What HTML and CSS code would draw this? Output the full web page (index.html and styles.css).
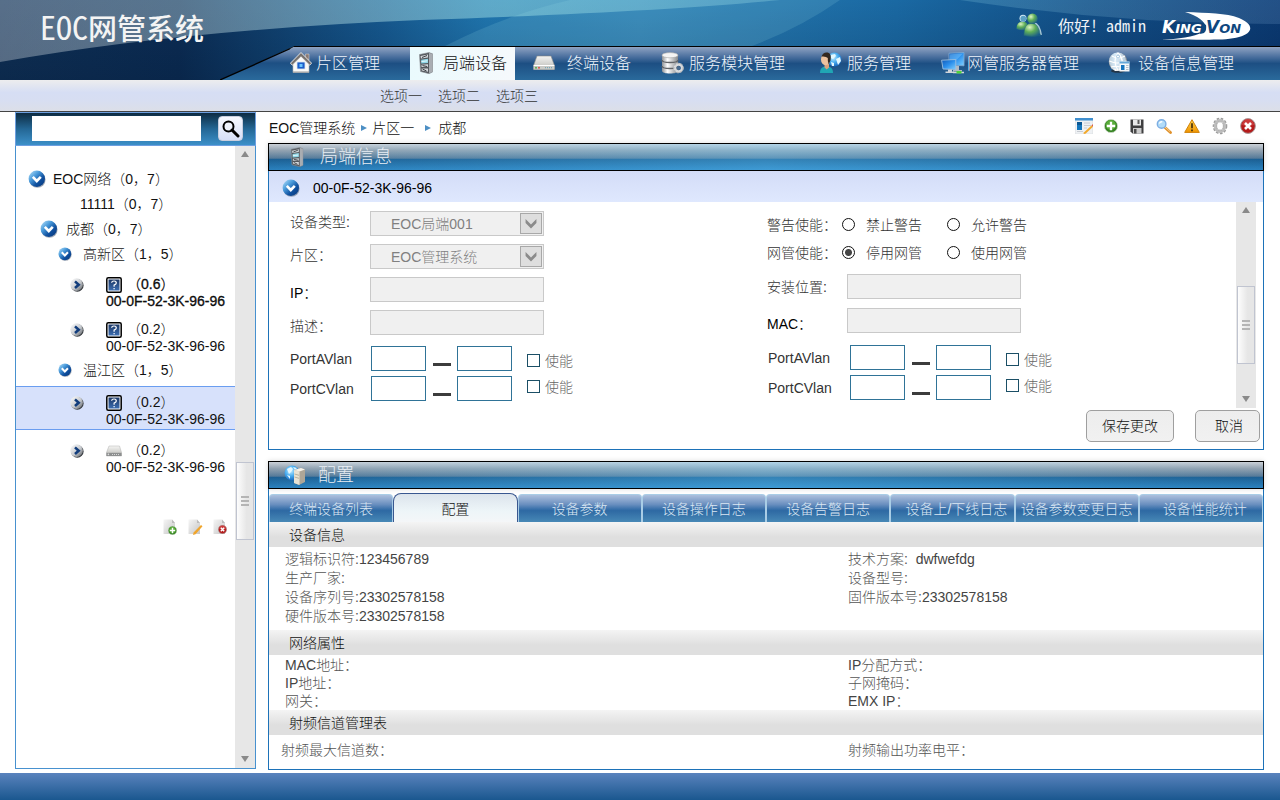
FILE: index.html
```html
<!DOCTYPE html>
<html lang="zh-CN">
<head>
<meta charset="utf-8">
<title>EOC网管系统</title>
<link rel="stylesheet" href="styles.css">
</head>
<body>
<svg class="defs" aria-hidden="true">
  <defs>
    <linearGradient id="g-ball" x1="0" y1="0" x2="1" y2="1"><stop offset="0" stop-color="#bfe6fb"/><stop offset=".35" stop-color="#4a9bdb"/><stop offset=".65" stop-color="#0f4f9e"/><stop offset="1" stop-color="#0a3878"/></linearGradient>
    <linearGradient id="g-grey" x1="0" y1="0" x2="1" y2="1"><stop offset="0" stop-color="#ffffff"/><stop offset=".55" stop-color="#c9ccd0"/><stop offset="1" stop-color="#55595e"/></linearGradient>
    <linearGradient id="g-metal" x1="0" y1="0" x2="1" y2="0"><stop offset="0" stop-color="#8f9295"/><stop offset=".35" stop-color="#ffffff"/><stop offset="1" stop-color="#85888b"/></linearGradient>
    <linearGradient id="g-screen" x1="0" y1="0" x2="1" y2="1"><stop offset="0" stop-color="#0f57b5"/><stop offset=".5" stop-color="#2b8fec"/><stop offset="1" stop-color="#7fd0ff"/></linearGradient>
    <linearGradient id="g-help" x1="0" y1="0" x2="0" y2="1"><stop offset="0" stop-color="#1b3766"/><stop offset="1" stop-color="#3c6db0"/></linearGradient>
    <linearGradient id="g-drive" x1="0" y1="0" x2="0" y2="1"><stop offset="0" stop-color="#f5f5f3"/><stop offset="1" stop-color="#b9b9b5"/></linearGradient>
    <linearGradient id="g-page" x1="0" y1="0" x2="1" y2="1"><stop offset="0" stop-color="#f6f6f6"/><stop offset="1" stop-color="#c6c6c6"/></linearGradient>
    <linearGradient id="g-warn" x1="0" y1="0" x2="0" y2="1"><stop offset="0" stop-color="#ffd24a"/><stop offset="1" stop-color="#f09400"/></linearGradient>
    <radialGradient id="g-globe" cx=".4" cy=".35" r=".7"><stop offset="0" stop-color="#c9efff"/><stop offset=".5" stop-color="#4aaef0"/><stop offset="1" stop-color="#1360b8"/></radialGradient>
    <radialGradient id="g-person" cx=".35" cy=".3" r=".8"><stop offset="0" stop-color="#dff5c4"/><stop offset=".45" stop-color="#5fae58"/><stop offset="1" stop-color="#14558d"/></radialGradient>
    <linearGradient id="g-rim" x1="0" y1="0" x2="1" y2="0"><stop offset="0" stop-color="#fff" stop-opacity=".3"/><stop offset=".4" stop-color="#9fe0e4" stop-opacity=".48"/><stop offset=".75" stop-color="#7fc4dc" stop-opacity=".26"/><stop offset="1" stop-color="#6f98c4" stop-opacity=".24"/></linearGradient>
    <linearGradient id="g-nav" x1="0" y1="0" x2="0" y2="1"><stop offset="0" stop-color="#8fa3c2"/><stop offset=".3" stop-color="#4a6f9e"/><stop offset=".5" stop-color="#1d4f83"/><stop offset="1" stop-color="#2a6a9c"/></linearGradient>
  </defs>
  <symbol id="i-ball" viewBox="0 0 18 18">
    <circle cx="9.400" cy="9.600" r="8.200" fill="#4b5a70" opacity=".5"/>
    <circle cx="8.800" cy="8.800" r="8.200" fill="url(#g-ball)"/>
    <path d="M4.800 6.800l4 4.200 4-4.200" fill="none" stroke="#fff" stroke-width="2.600"/>
  </symbol>
  <symbol id="i-arrow" viewBox="0 0 14 14">
    <circle cx="7.300" cy="7.400" r="6.300" fill="#33373c"/>
    <circle cx="6.600" cy="6.600" r="6.300" fill="url(#g-grey)"/>
    <path d="M5 3.400l3.700 3.300L5 10" fill="none" stroke="#123d7c" stroke-width="2.600"/>
  </symbol>
  <symbol id="i-help" viewBox="0 0 16 16">
    <rect x=".8" y=".8" width="14.400" height="14.400" rx="1.500" fill="#fff" stroke="#000" stroke-width="1.500"/>
    <rect x="2.500" y="2.500" width="11" height="11" fill="url(#g-help)"/>
    <path d="M5.600 5.800Q5.800 4 8 4t2.300 1.900Q10.300 7.200 8.100 8.100V9.700M8.100 11v1.200" fill="none" stroke="#fff" stroke-width="1.200"/>
  </symbol>
  <symbol id="i-drive" viewBox="0 0 22 16">
    <path d="M4 1h14l3.500 9.500v4H.5v-4z" fill="url(#g-drive)" stroke="#8c8c88" stroke-width=".6"/>
    <path d="M.7 10.500h20.600v4H.7z" fill="#c9cac6"/>
    <path d="M.7 10.500h20.600" stroke="#fff"/>
    <circle cx="3" cy="12.700" r="1" fill="#5bab4e"/><circle cx="6" cy="12.700" r="1" fill="#d9564a"/>
    <path d="M12 12.700h7" stroke="#77a6b8" stroke-width="1.200" stroke-dasharray="1 1"/>
  </symbol>
  <symbol id="i-driveg" viewBox="0 0 16 12">
    <path d="M3 1h10.500l2 6.500V11H.5V7.500z" fill="url(#g-drive)" stroke="#b0b0b0" stroke-width=".5"/>
    <path d="M.5 7.800h15V11H.5z" fill="#8d8f8f"/>
    <path d="M6 9.500h8" stroke="#d8d8d8" stroke-dasharray="1 1"/><circle cx="2.400" cy="9.400" r=".8" fill="#ddd"/>
  </symbol>
  <symbol id="i-server" viewBox="0 0 16 22">
    <path d="M1.500 2.500L11 .5l3.500 1.300V20L11 21.700 2.500 19.500z" fill="#54585d" stroke="#8f9499" stroke-width=".6"/>
    <path d="M11 .7l3.500 1.300v18L11 21.500z" fill="#a9adb2"/>
    <path d="M2.500 4l7.500-1.500v3L3 6.500zM3.500 12.800l6.500-.5v2.500l-6.500.3zM3.500 16.500l6.500-.1v3.300l-6.200-1.200z" fill="#d2d6da"/>
    <path d="M3.200 7.700l6.800-1v4.200l-6.800.7z" fill="#8fd6e6"/>
    <path d="M3.500 9.500l6-.7" stroke="#e8fafd" stroke-width="1"/>
    <path d="M4.500 13.500l4.500 1M4.500 17l4 2M4 5.500l5-2" stroke="#2d3135" stroke-width=".9"/>
  </symbol>
  <symbol id="i-home" viewBox="0 0 22 22">
    <path d="M15.500 2H19v6h-3.500z" fill="#8b7a74" stroke="#d8d8d8" stroke-width=".5"/>
    <path d="M3 11L11 3l8 8v9.500H3z" fill="#fafaf8" stroke="#b5b5b5" stroke-width=".6"/>
    <path d="M.4 11.200L11 .5l10.600 10.700-2 2L11 4.800l-8.600 8.400z" fill="#77726f" stroke="#f0f0f0" stroke-width=".9"/>
    <path d="M7 10h8v7H7z" fill="#1c5fcb" stroke="#dfe6ef" stroke-width=".8"/><path d="M9.500 12h3v3h-3z" fill="#6cc5ff"/>
    <path d="M3 20h16" stroke="#9b9b9b"/>
  </symbol>
  <symbol id="i-db" viewBox="0 0 23 22">
    <path d="M1 3v16c0 1.600 3.500 2.500 8 2.500s8-.9 8-2.500V3z" fill="url(#g-metal)"/>
    <ellipse cx="9" cy="3.200" rx="8" ry="2.600" fill="#f4f4f4" stroke="#a6a6a6" stroke-width=".6"/>
    <path d="M1 8c0 1.500 3.500 2.500 8 2.500S17 9.500 17 8M1 14c0 1.500 3.500 2.500 8 2.500s8-1 8-2.500" fill="none" stroke="#626568" stroke-width="1.300"/>
    <circle cx="17.500" cy="16" r="3.600" fill="none" stroke="#d9dbdd" stroke-width="2.600"/>
    <circle cx="17.500" cy="16" r="4.700" fill="none" stroke="#b2b6ba" stroke-width="1.200" stroke-dasharray="2 1.400"/>
    <circle cx="17.500" cy="16" r="2" fill="#476a8e"/>
  </symbol>
  <symbol id="i-user" viewBox="0 0 23 22">
    <circle cx="15.500" cy="7.500" r="7" fill="url(#g-globe)"/>
    <path d="M12 3l4-1 1 2-3 3-2-1zM17 7l4-2 1 4-3 4zM12 10l3 1v3h-2z" fill="#e2f7ff"/>
    <path d="M1 21c0-5 2.500-6.500 6.500-6.500S14 16 14 21z" fill="#20a6b4"/>
    <path d="M5.500 11.500h4.500v4l-2.300 2-2.200-2z" fill="#dba27d"/>
    <ellipse cx="6.500" cy="7.500" rx="4.500" ry="5.700" fill="#edc19e"/>
    <path d="M2.500 4.500Q4 .5 7.500.5C11 .5 12.500 3 11.500 8.500l-1.800 3.800Q8.500 9 8.800 6 7 4 2.500 4.500z" fill="#332720"/>
  </symbol>
  <symbol id="i-monitors" viewBox="0 0 24 22">
    <path d="M14 14h4v4h3v1.500h-9V18h2z" fill="#b3bac2"/>
    <path d="M8 1.200L23 .5v13.300L8 13z" fill="url(#g-screen)" stroke="#7ea8cf" stroke-width=".9"/>
    <path d="M9 2.200l13-.7-8 8-5 2z" fill="#7ecaff" opacity=".45"/>
    <path d="M.6 8.200l14.200-.7v10L2 17z" fill="url(#g-screen)" stroke="#9dbfdf" stroke-width=".9"/>
    <path d="M7 17.500h4v2h2V21H4.500v-1.500H7z" fill="#d0d5da"/>
    <path d="M12 20.500h11" stroke="#d5d8da" stroke-width="1.500"/><path d="M15.500 19h5v2.500h-5z" fill="#4fd43a"/>
  </symbol>
  <symbol id="i-netinfo" viewBox="0 0 22 21">
    <ellipse cx="10" cy="19" rx="7" ry="1.800" fill="#23272b" opacity=".7"/>
    <circle cx="10" cy="9.800" r="9.300" fill="url(#g-metal)"/>
    <circle cx="9.500" cy="9" r="8.400" fill="#c9e2f4" opacity=".72"/>
    <path d="M1.500 9q8 4 17 0M10 .8q-6 8 0 17.500M4 4q6 4 13 0M10 1q8 8 1 17M3 15q6-2 12 1" fill="none" stroke="#fff" stroke-width="1.100"/>
    <circle cx="10" cy="4.500" r="1.500" fill="#fff" stroke="#71a6cf" stroke-width=".6"/>
    <path d="M11.500 9.500h10v10h-10z" fill="#f6f8fa"/><path d="M11.500 9.500h10v2h-10z" fill="#66a7d8"/><path d="M13 13h3.500v5H13z" fill="#1674bd"/><path d="M18 13.500h2.500M18 15.500h2.500M18 17.500h2.500" stroke="#b4bfc9"/>
  </symbol>
  <symbol id="i-people" viewBox="0 0 27 24">
    <path d="M.5 16q0-7.500 6-7.500T12.500 16q-6 2.500-12 0z" fill="url(#g-person)"/>
    <circle cx="7" cy="5.200" r="3.500" fill="#cfe8f5"/><circle cx="7.300" cy="5.600" r="2.900" fill="#5aa0c5"/>
    <path d="M18 9q6 1 8 13l-5-1z" fill="#cfe7ec" opacity=".8"/>
    <path d="M8 22.500q-.5-12 7.500-12.200 7.500-.2 8.800 12.200-8 2.200-16.300 0z" fill="url(#g-person)" stroke="#256c75" stroke-width=".5"/>
    <circle cx="16.500" cy="5.800" r="5.200" fill="url(#g-person)"/>
  </symbol>
  <symbol id="i-globepc" viewBox="0 0 22 20">
    <circle cx="8" cy="8" r="7.500" fill="url(#g-globe)"/>
    <path d="M3 4l4-2 2 2-2 3-2 2zM3 10l3 1v3zM9 2l4 1-2 2z" fill="#e5f8ff"/>
    <path d="M10 5l7-2 4 1.500V17l-6 3-5-2z" fill="#aea697"/><path d="M10 5l5.500 1.500V20L10 18z" fill="#e8e2d3"/><path d="M10 5l7-2 4 1.500-5.500 2z" fill="#f7f3ea"/>
    <path d="M10.500 9l4.500 1.300M10.500 12l4.500 1.300" stroke="#aba48f" stroke-width=".8"/>
  </symbol>
  <symbol id="i-form" viewBox="0 0 18 16">
    <path d="M.3.5h17.400V16H.3z" fill="#eef1f4" stroke="#d0d4d8" stroke-width=".5"/><path d="M0 0h18v2.500H0z" fill="#3f8fcf"/>
    <path d="M2 4h5v8H2z" fill="#1476bd"/><path d="M2 4h5v3H2z" fill="#0b5793"/>
    <path d="M9 5h6M9 7.500h7M9 10h3M2 13.500h6" stroke="#c8ccd2"/>
    <path d="M16.500 7.500l1.500 1.300-7.500 7L8.500 16l.6-1.800z" fill="#f3a92b"/><path d="M16.500 7.500L18 6v2.800z" fill="#d9584e"/>
  </symbol>
  <symbol id="i-add" viewBox="0 0 14 14">
    <circle cx="7" cy="7" r="6.600" fill="#358321" stroke="#cfd8cb" stroke-width=".7"/><circle cx="6.800" cy="6" r="5" fill="#58ac39"/>
    <path d="M7 2.800v8.400M2.800 7h8.400" stroke="#fff" stroke-width="2.300"/>
  </symbol>
  <symbol id="i-save" viewBox="0 0 14 15">
    <path d="M.5.500h13v14h-11l-2-2z" fill="#3f3f40"/><path d="M3 .5h8v6H3z" fill="#e9e9e9"/><path d="M7.500 1h2v4h-2z" fill="#5a5a5a"/>
    <path d="M3 9h8.500v5.500H3z" fill="#cdcdcd"/><path d="M4 10h2.500v4.500H4z" fill="#4b4b4b"/>
  </symbol>
  <symbol id="i-zoom" viewBox="0 0 16 15">
    <path d="M9 8.500l5.500 5" stroke="#e0912b" stroke-width="2.800" stroke-linecap="round"/><path d="M9 8l5 4.500" stroke="#f8d494"/>
    <circle cx="5.600" cy="5" r="4.300" fill="#b2dcf8" stroke="#7daee3" stroke-width="1.400"/><path d="M3.300 4.500q1-2 3-1.700" stroke="#fff" fill="none" stroke-width="1.300"/>
  </symbol>
  <symbol id="i-warn" viewBox="0 0 16 14">
    <path d="M8 .7l7.300 12.700H.7z" fill="url(#g-warn)" stroke="#cf8208" stroke-linejoin="round"/><path d="M8 4.300v5M8 10.500v1.800" stroke="#47310b" stroke-width="1.700"/>
  </symbol>
  <symbol id="i-gear" viewBox="0 0 16 18">
    <ellipse cx="8" cy="9" rx="6.400" ry="7.400" fill="none" stroke="#9b9b9b" stroke-width="1.800" stroke-dasharray="2.600 1.500"/>
    <ellipse cx="8" cy="9" rx="4.900" ry="5.700" fill="#fff" stroke="#bdbdbd" stroke-width="2.600"/>
    <ellipse cx="8" cy="9" rx="3.400" ry="4.200" fill="#fff" stroke="#8e8e8e" stroke-width=".7"/>
  </symbol>
  <symbol id="i-close" viewBox="0 0 16 16">
    <circle cx="8" cy="8" r="7.400" fill="#b41b1b" stroke="#ab9d9d"/><path d="M2 7a6 6 0 0 1 12 0Q8 9 2 7z" fill="#d85050" opacity=".6"/>
    <path d="M5 5l6 6M11 5l-6 6" stroke="#fff" stroke-width="2.600"/>
  </symbol>
  <symbol id="i-page" viewBox="0 0 14 16"><path d="M.5.500h8.500l3 3.500v11H.5z" fill="url(#g-page)"/><path d="M9 .5V4h3z" fill="#bcbcbc"/></symbol>
  <symbol id="i-search" viewBox="0 0 18 18"><circle cx="6.500" cy="6.500" r="5" fill="#eef2fc" stroke="#000" stroke-width="2"/><path d="M10 10l6 6" stroke="#000" stroke-width="3" stroke-linecap="round"/></symbol>
</svg>

<header class="header">
  <svg class="header__glow" viewBox="0 0 1280 80" preserveAspectRatio="none" aria-hidden="true">
    <path d="M0 0H1280V24Q1120 24 960 0H780Q660 12 420 20 180 30 0 62z" fill="url(#g-rim)"/>
    <path d="M445 46Q505 15 570 0H840Q800 28 752 46z" fill="#a0e4ee" opacity=".15"/>
  </svg>
  <div class="header__top">
    <h1 class="header__title"><span class="header__latin">EOC</span>网管系统</h1>
    <div class="account">
      <svg class="account__icon" width="27" height="24"><use href="#i-people"/></svg>
      <span class="account__text">你好! admin</span>
      <svg class="account__logo" width="92" height="30" viewBox="0 0 92 30" role="img" aria-label="KingVon">
        <path d="M25 2C48 3 66 3 79 8 94 14 94 23 79 27 62 32 30 28 1 30 18 29 34 27 43 22 50 16 42 7 25 2z" fill="#fff"/>
        <path d="M44 23q3-3 2-8l-3-2-3 11z" fill="#0f477e"/>
        <text x="2" y="23" class="logo-text logo-text--light"><tspan class="logo-text__cap">K</tspan>ING</text>
        <text x="46" y="23" class="logo-text logo-text--dark"><tspan class="logo-text__cap">V</tspan>ON</text>
      </svg>
    </div>
  </div>
  <nav class="nav">
    <svg class="nav__edge" viewBox="0 0 76 34" aria-hidden="true"><path d="M0 34L75 0H76V34z" fill="url(#g-nav)"/><path d="M0 34L75 .5h1" fill="none" stroke="#000" stroke-width="1.300"/></svg>
    <div class="nav__items">
      <a class="nav__item" href="#"><svg width="26" height="22" viewBox="0 0 26 22"><use href="#i-home" width="22" height="22"/></svg>片区管理</a>
      <a class="nav__item nav__item--active" href="#"><svg width="25" height="22" viewBox="0 0 25 22"><use href="#i-server" width="16" height="22"/></svg>局端设备</a>
      <a class="nav__item" href="#"><svg width="34" height="22" viewBox="0 0 34 22"><use href="#i-drive" y="3" width="22" height="16"/></svg>终端设备</a>
      <a class="nav__item" href="#"><svg width="28" height="22" viewBox="0 0 28 22"><use href="#i-db" width="23" height="22"/></svg>服务模块管理</a>
      <a class="nav__item" href="#"><svg width="28" height="22" viewBox="0 0 28 22"><use href="#i-user" width="23" height="22"/></svg>服务管理</a>
      <a class="nav__item" href="#"><svg width="26" height="22" viewBox="0 0 26 22"><use href="#i-monitors" width="24" height="22"/></svg>网管服务器管理</a>
      <a class="nav__item" href="#"><svg width="30" height="22" viewBox="0 0 30 22"><use href="#i-netinfo" width="22" height="21"/></svg>设备信息管理</a>
    </div>
  </nav>
</header>

<nav class="subnav"><a href="#">选项一</a><a href="#">选项二</a><a href="#">选项三</a></nav>

<main class="main">
  <aside class="sidebar">
    <form class="search">
      <input class="search__input" type="text" aria-label="搜索">
      <button class="search__button" type="button" aria-label="搜索"><svg width="18" height="18"><use href="#i-search"/></svg></button>
    </form>
    <div class="sidebar__body">
      <div class="sidebar__content">
        <ul class="tree">
          <li class="node node--root"><svg width="18" height="18"><use href="#i-ball"/></svg>EOC网络（0，7）</li>
          <li class="node node--plain">11111（0，7）</li>
          <li class="node node--city"><svg width="18" height="18"><use href="#i-ball"/></svg>成都（0，7）</li>
          <li class="node node--area"><svg width="14" height="14"><use href="#i-ball"/></svg>高新区（1，5）</li>
          <li class="device device--bold"><svg class="device__arrow" width="14" height="14"><use href="#i-arrow"/></svg><svg class="device__icon" width="16" height="16"><use href="#i-help"/></svg><span class="device__count">（0.6）</span><span class="device__mac">00-0F-52-3K-96-96</span></li>
          <li class="device"><svg class="device__arrow" width="14" height="14"><use href="#i-arrow"/></svg><svg class="device__icon" width="16" height="16"><use href="#i-help"/></svg><span class="device__count">（0.2）</span><span class="device__mac">00-0F-52-3K-96-96</span></li>
          <li class="node node--area"><svg width="14" height="14"><use href="#i-ball"/></svg>温江区（1，5）</li>
          <li class="device device--selected"><svg class="device__arrow" width="14" height="14"><use href="#i-arrow"/></svg><svg class="device__icon" width="16" height="16"><use href="#i-help"/></svg><span class="device__count">（0.2）</span><span class="device__mac">00-0F-52-3K-96-96</span></li>
          <li class="device"><svg class="device__arrow" width="14" height="14"><use href="#i-arrow"/></svg><svg class="device__icon" width="16" height="12"><use href="#i-driveg"/></svg><span class="device__count">（0.2）</span><span class="device__mac">00-0F-52-3K-96-96</span></li>
        </ul>
        <div class="tree-actions">
          <button type="button" aria-label="新增"><svg width="15" height="17" viewBox="0 0 15 17"><use href="#i-page" width="14" height="16"/><use href="#i-add" x="5" y="7" width="9" height="9"/></svg></button>
          <button type="button" aria-label="编辑"><svg width="15" height="17" viewBox="0 0 15 17"><use href="#i-page" width="14" height="16"/><path d="M13 6l1.500 1.200-7 8L5 16l.6-2.500z" fill="#f0a52c"/></svg></button>
          <button type="button" aria-label="删除"><svg width="15" height="17" viewBox="0 0 15 17"><use href="#i-page" width="14" height="16"/><use href="#i-close" x="5" y="6" width="9" height="9"/></svg></button>
        </div>
      </div>
      <div class="scroll scroll--side" aria-hidden="true"><span class="scroll__up"></span><span class="scroll__before"></span><span class="scroll__thumb"></span><span class="scroll__after"></span><span class="scroll__down"></span></div>
    </div>
  </aside>

  <div class="content">
    <div class="crumbbar">
      <nav class="crumbs"><a href="#">EOC管理系统</a><i></i><a href="#">片区一</a><i class="crumbs__wide"></i><a href="#">成都</a></nav>
      <div class="tools">
        <button type="button" aria-label="编辑"><svg width="18" height="16"><use href="#i-form"/></svg></button>
        <button type="button" aria-label="新增"><svg width="14" height="14"><use href="#i-add"/></svg></button>
        <button type="button" aria-label="保存"><svg width="14" height="15"><use href="#i-save"/></svg></button>
        <button type="button" aria-label="查找"><svg width="16" height="15"><use href="#i-zoom"/></svg></button>
        <button type="button" aria-label="警告"><svg width="16" height="14"><use href="#i-warn"/></svg></button>
        <button type="button" aria-label="设置"><svg width="16" height="18"><use href="#i-gear"/></svg></button>
        <button type="button" aria-label="关闭"><svg width="16" height="16"><use href="#i-close"/></svg></button>
      </div>
    </div>

    <section class="panel panel--info">
      <h2 class="panel__title"><svg width="16" height="20"><use href="#i-server"/></svg>局端信息</h2>
      <div class="panel__body">
        <div class="macbar"><svg width="18" height="18"><use href="#i-ball"/></svg>00-0F-52-3K-96-96</div>
        <div class="info">
          <form class="form">
            <div class="form__col">
              <div class="row row--select"><label for="type">设备类型:</label><span class="select"><select id="type" disabled><option>EOC局端001</option></select><svg width="22" height="21" viewBox="0 0 22 21" aria-hidden="true"><path d="M5 5.500L11 11.500 17 5.500V10L11 16 5 10z" fill="#8b8b8b"/></svg></span></div>
              <div class="row row--select"><label for="area">片区：</label><span class="select"><select id="area" disabled><option>EOC管理系统</option></select><svg width="22" height="21" viewBox="0 0 22 21" aria-hidden="true"><path d="M5 5.500L11 11.500 17 5.500V10L11 16 5 10z" fill="#8b8b8b"/></svg></span></div>
              <div class="row row--low"><label class="strong" for="ip">IP：</label><input class="text" id="ip" type="text" disabled></div>
              <div class="row row--low"><label for="desc">描述：</label><input class="text" id="desc" type="text" disabled></div>
              <div class="row row--port row--first"><label for="a1">PortAVlan</label><input class="port" id="a1" type="text"><b></b><input class="port" type="text" aria-label="PortAVlan 结束"><label class="check"><input type="checkbox">使能</label></div>
              <div class="row row--port"><label for="c1">PortCVlan</label><input class="port" id="c1" type="text"><b></b><input class="port" type="text" aria-label="PortCVlan 结束"><label class="check"><input type="checkbox">使能</label></div>
            </div>
            <div class="form__col form__col--right">
              <div class="row row--radio"><span class="row__label">警告使能：</span><label class="radio"><input type="radio" name="alarm">禁止警告</label><label class="radio"><input type="radio" name="alarm">允许警告</label></div>
              <div class="row row--radio"><span class="row__label">网管使能：</span><label class="radio"><input type="radio" name="nms" checked>停用网管</label><label class="radio"><input type="radio" name="nms">使用网管</label></div>
              <div class="row"><label for="place">安装位置:</label><input class="text" id="place" type="text" disabled></div>
              <div class="row row--low"><label class="strong" for="mac">MAC：</label><input class="text" id="mac" type="text" disabled></div>
              <div class="row row--port row--first"><label for="a2">PortAVlan</label><input class="port" id="a2" type="text"><b></b><input class="port" type="text" aria-label="PortAVlan 结束"><label class="check"><input type="checkbox">使能</label></div>
              <div class="row row--port"><label for="c2">PortCVlan</label><input class="port" id="c2" type="text"><b></b><input class="port" type="text" aria-label="PortCVlan 结束"><label class="check"><input type="checkbox">使能</label></div>
            </div>
          </form>
          <div class="scroll scroll--info" aria-hidden="true"><span class="scroll__up"></span><span class="scroll__before"></span><span class="scroll__thumb"></span><span class="scroll__after"></span><span class="scroll__down"></span></div>
        </div>
        <div class="actions"><button class="btn" type="button">保存更改</button><button class="btn btn--cancel" type="button">取消</button></div>
      </div>
    </section>

    <section class="panel panel--config">
      <h2 class="panel__title"><svg width="22" height="20"><use href="#i-globepc"/></svg>配置</h2>
      <div class="panel__body">
        <div class="tabs" role="tablist">
          <button class="tab" type="button" role="tab">终端设备列表</button>
          <button class="tab tab--active" type="button" role="tab" aria-selected="true">配置</button>
          <button class="tab" type="button" role="tab">设备参数</button>
          <button class="tab" type="button" role="tab">设备操作日志</button>
          <button class="tab" type="button" role="tab">设备告警日志</button>
          <button class="tab tab--shift" type="button" role="tab">设备上/下线日志</button>
          <button class="tab" type="button" role="tab">设备参数变更日志</button>
          <button class="tab tab--shift" type="button" role="tab">设备性能统计</button>
        </div>
        <h3 class="bar">设备信息</h3>
        <div class="facts facts--device">
          <ul><li>逻辑标识符:<em>123456789</em></li><li>生产厂家:</li><li>设备序列号:<em>23302578158</em></li><li>硬件版本号:<em>23302578158</em></li></ul>
          <ul><li>技术方案:&nbsp; <em>dwfwefdg</em></li><li>设备型号:</li><li>固件版本号:<em>23302578158</em></li></ul>
        </div>
        <h3 class="bar">网络属性</h3>
        <div class="facts facts--network">
          <ul><li><em>MAC</em>地址：</li><li><em>IP</em>地址：</li><li>网关：</li></ul>
          <ul><li><em>IP</em>分配方式：</li><li>子网掩码：</li><li><em>EMX IP</em>：</li></ul>
        </div>
        <h3 class="bar">射频信道管理表</h3>
        <div class="facts facts--rf">
          <ul><li>射频最大信道数：</li></ul>
          <ul><li>射频输出功率电平：</li></ul>
        </div>
      </div>
    </section>
  </div>
</main>
<footer class="footer"></footer>
</body>
</html>
```
FILE: styles.css
```css
* { box-sizing: border-box; }

body {
  margin: 0;
  min-height: 100vh;
  display: flex;
  flex-direction: column;
  font: 300 14px/20px "Liberation Sans", "Noto Sans CJK SC", sans-serif;
  color: #111;
  background: #fff;
}

a { color: inherit; text-decoration: none; }
ul { margin: 0; padding: 0; list-style: none; }
h1, h2, h3 { margin: 0; font-weight: 300; }
button, input, select { font: inherit; color: inherit; margin: 0; }
button { padding: 0; border: 0; background: none; }
svg { display: block; flex: none; }
.defs { position: absolute; width: 0; height: 0; }

/* Header */
.header {
  position: relative;
  height: 80px;
  display: flex;
  flex-direction: column;
  background:
    linear-gradient(rgba(0, 10, 30, 0), rgba(0, 10, 30, .2)),
    linear-gradient(90deg, #0f3157, #0b2d55 14%, #165a91 30%, #2077b0 38%, #2a7fb5 50%, #1a69a3 70%, #124f87 85%, #0b3a73);
}
.header__glow { position: absolute; inset: 0; width: 100%; height: 100%; }
.header__top {
  position: relative;
  height: 46px;
  display: flex;
  justify-content: space-between;
  padding: 0 28px 0 40px;
}
.header__title {
  font: 500 29px/52px "Noto Sans CJK SC", sans-serif;
  color: #f4f4f4;
}
.header__latin { font-family: "Noto Sans Mono CJK SC", "Liberation Mono", monospace; font-size: 32px; font-weight: 400; }
.account { display: flex; align-items: center; padding-top: 3px; }
.account__text {
  padding: 0 14px 0 15px;
  font-family: "Noto Sans Mono CJK SC", "Noto Sans CJK SC", sans-serif;
  font-size: 16px;
  color: #eef3f8;
}
.logo-text { font: italic bold 13px "DejaVu Sans", sans-serif; }
.logo-text__cap { font-size: 17px; }
.logo-text--light { fill: #fff; }
.logo-text--dark { fill: #0f477e; }

.nav { position: relative; height: 34px; display: flex; padding-left: 220px; }
.nav__edge { width: 76px; height: 34px; }
.nav__items {
  flex: 1;
  display: grid;
  grid-template-columns: 120fr 123fr 128fr 158fr 122fr 167fr 172fr;
  margin-left: -6px;
  border-top: 1px solid #000;
  background: linear-gradient(#8fa3c2, #4a6f9e 30%, #1d4f83 50%, #2a6a9c);
  background-clip: padding-box;
  clip-path: polygon(0 3px, 5px 0, 100% 0, 100% 100%, 0 100%);
}
.nav__item {
  display: flex;
  align-items: center;
  justify-self: start;
  white-space: nowrap;
  font-size: 16px;
  color: #eef4fb;
}
.nav__item svg { margin-top: -2px; }
.nav__item--active {
  padding: 0 8px;
  background: linear-gradient(90deg, #eafafd, #f6f9fc);
  color: #111;
}

.subnav {
  display: flex;
  gap: 16px;
  height: 32px;
  padding-left: 380px;
  line-height: 32px;
  color: #333;
  border-bottom: 1px solid #444;
  background: linear-gradient(#ededee, #d6def4 40%, #d7def2 65%, #dcdfe8);
}

/* Page columns */
.main { flex: 1; display: flex; gap: 12px; padding: 0 16px 3px 15px; }

.sidebar { width: 241px; flex: none; display: flex; flex-direction: column; margin-bottom: 1px; }
.search {
  display: flex;
  gap: 17px;
  height: 34px;
  padding: 3px 0 0 16px;
  border: 1px solid #6d9fe0;
  background: linear-gradient(#0d2b42, #246795 50%, #3c90c9);
}
.search__input { width: 169px; height: 25px; padding: 0 6px; border: 0; background: #fff; }
.search__button {
  width: 25px;
  height: 25px;
  padding: 3px;
  border: 1px solid #c8cede;
  border-radius: 4px;
  background: linear-gradient(#f7f9ff, #d6dff8);
}
.sidebar__body { flex: 1; display: flex; border: 1px solid #4791cf; border-top: 0; }
.sidebar__content { flex: 1; padding-top: 21px; }

.tree { display: flex; flex-direction: column; gap: 1px; }
.node { display: flex; align-items: center; height: 24px; }
.node--root { gap: 7px; padding-left: 12px; }
.node--plain { padding-left: 64px; }
.node--city { gap: 8px; padding-left: 24px; }
.node--area { gap: 11px; padding-left: 42px; }
.device {
  display: grid;
  grid-template-columns: 36px 21px 1fr;
  grid-template-rows: 17px 17px;
  align-items: center;
  height: 44px;
  padding: 7px 0 1px 54px;
  border: solid transparent;
  border-width: 1px 0;
  line-height: 17px;
  white-space: nowrap;
}
.node + .device { margin-top: 1px; }
.device__mac { grid-column: 2 / -1; }
.device--bold { -webkit-text-stroke: 0.300px #000; }
.node + .device--selected {
  margin: 3px 0;
  border-color: #6a9df0;
  background: #d7e1fb;
}
.tree-actions { display: flex; justify-content: flex-end; gap: 10px; padding: 41px 7px 0 0; }

/* Scroll bars */
.scroll { width: 20px; flex: none; display: flex; flex-direction: column; align-items: center; background: #e7e7e7; }
.scroll__up, .scroll__down { border: 4px solid transparent; }
.scroll__up { margin-top: 1px; border-bottom: 6px solid #8a8a8a; }
.scroll__down { margin-bottom: 2px; border-top: 6px solid #8a8a8a; }
.scroll__thumb {
  width: 18px;
  height: 78px;
  border: 1px solid #c0c4d0;
  background:
    repeating-linear-gradient(#b4b4b4 0 2px, transparent 2px 4px) center / 8px 10px no-repeat,
    linear-gradient(90deg, #fdfdfd, #e6e6e6 60%);
}
.scroll--side .scroll__before { flex: 304; }
.scroll--side .scroll__after { flex: 216; }
.scroll--info .scroll__before { flex: 72; }
.scroll--info .scroll__after { flex: 32; }

/* Content */
.content { flex: 1; min-width: 0; display: flex; flex-direction: column; }
.crumbbar { display: flex; justify-content: space-between; height: 31px; padding: 0 8px 0 1px; }
.crumbs { display: flex; align-items: center; }
.crumbs i { margin: 0 5px 0 6px; border: solid transparent; border-width: 3px 0 3px 6px; border-left-color: #4d8fc4; }
.crumbs .crumbs__wide { margin: 0 7px 0 11px; }
.tools { display: flex; align-items: center; gap: 12px; padding-bottom: 3px; }
.tools button:first-child { margin-right: -1px; }

.panel { display: flex; flex-direction: column; }
.panel--info { margin-bottom: 11px; }
.panel--config { flex: 1; }
.panel__title {
  display: flex;
  align-items: center;
  height: 28px;
  padding-left: 20px;
  border: 1px solid #000;
  font-size: 18px;
  line-height: 26px;
  color: #e8eef4;
  background:
    linear-gradient(90deg, rgba(0, 40, 80, .05), rgba(100, 200, 250, .32) 50%, rgba(0, 40, 80, .05)),
    linear-gradient(#d6d9de, #9aa8b5 25%, #5a7e9c 55%, #1d6296 58%, #2d86c4);
  box-shadow: 0 0 5px rgba(0, 0, 0, .15);
}
.panel__title svg { margin-right: 15px; }
.panel--config .panel__title { padding-left: 15px; }
.panel--config .panel__title svg { margin-right: 12px; }
.panel__body { flex: 1; border: 1px solid #1d72b8; border-top: 0; }

.macbar {
  display: flex;
  align-items: center;
  gap: 13px;
  height: 31px;
  padding: 2px 0 0 13px;
  background: linear-gradient(#d3dcf7, #dfe8fe);
  color: #000;
}
.info { display: flex; padding-right: 7px; }
.form { flex: 1; min-width: 0; display: flex; padding: 9px 0 7px 21px; color: #333; }
.form__col { flex: 477 1 0; min-width: 0; display: flex; flex-direction: column; gap: 8px; }
.row { display: flex; align-items: center; height: 25px; }
.row > label:first-child, .row__label { width: 80px; flex: none; white-space: nowrap; }
.row--select > label:first-child { padding-bottom: 3px; }
.row--low > label:first-child { padding-top: 6px; }
.strong { color: #000; }
.row--first { margin-top: 3px; }
.row--port { gap: 7px; }
.row--port + .row--port { margin-top: -3px; }
.row--port > label:first-child { width: 74px; }
.select { position: relative; width: 174px; height: 25px; }
.select select {
  width: 100%;
  height: 100%;
  padding: 0 24px 0 20px;
  appearance: none;
  border: 1px solid #c9c9c9;
  border-radius: 0;
  background: #f0f0f0;
  color: #808080;
  opacity: 1;
}
.select svg { position: absolute; right: 2px; top: 2px; border: 1px solid #a8a8a8; background: #dedede; }
.text { width: 174px; height: 25px; border: 1px solid #c9c9c9; background: #f0f0f0; }
.port { width: 55px; height: 25px; padding: 0 4px; border: 1px solid #2f7397; background: #fff; }
.row--port b { width: 18px; height: 3px; margin: 12px -1px 0 0; background: #3c3c3c; }
.check { display: flex; align-items: center; gap: 5px; margin-left: 8px; padding-bottom: 4px; color: #666; }
.row--first .check { padding: 4px 0 0; }
.check input { width: 13px; height: 13px; appearance: none; border: 1px solid #1b4f66; background: #fff; }

.form__col--right { flex-grow: 469; gap: 9px; padding-top: 1px; }
.form__col--right .row--radio + .row--radio { margin-top: -6px; }
.form__col--right .row--port + .row--port { margin-top: -4px; }
.form__col--right .row--port > label:first-child { width: 76px; padding-left: 1px; }
.row--radio .row__label { width: 75px; }
.radio { display: flex; align-items: center; gap: 11px; margin-right: 25px; white-space: nowrap; }
.radio input { width: 13px; height: 13px; appearance: none; border: 1px solid #111; border-radius: 50%; background: #fff; }
.radio input:checked { background: radial-gradient(#444 0 3px, #fff 4px); }

.actions { display: flex; justify-content: flex-end; gap: 21px; padding: 2px 3px 7px; }
.btn {
  width: 88px;
  height: 32px;
  border: 1px solid #9f9f9f;
  border-radius: 5px;
  background: linear-gradient(#ededed, #f1f1f1);
}
.btn--cancel { width: 65px; padding-left: 3px; }

/* Tabs */
.tabs { display: grid; grid-template-columns: repeat(8, minmax(0, 1fr)); align-items: end; height: 33px; padding-top: 4px; }
.tab {
  height: 28px;
  white-space: nowrap;
  color: #dbe7f3;
  border: 1px solid #a9cde6;
  border-width: 1px 1px 0;
  border-radius: 4px 4px 0 0;
  background: linear-gradient(#adc0dd, #6a8fbf 35%, #3a71ab 52%, #2e69a3 58%, #4788b6);
}
.tab--shift { padding-left: 8px; }
.tab--active {
  height: 29px;
  padding-top: 1px;
  color: #111;
  border-color: #3a5890;
  border-radius: 8px 8px 0 0;
  background: linear-gradient(#dce4ec, #edf5f8 60%, #f4f6f8);
}

.bar {
  height: 25px;
  padding-left: 20px;
  font-size: 14px;
  line-height: 27px;
  color: #111;
  background: linear-gradient(#f4f4f4, #dfdfdf 60%, #dfdfdf);
}
.facts { display: grid; grid-template-columns: 563fr 415fr; padding-left: 16px; color: #555; }
.facts em { font-style: normal; color: #444; }
.facts--device { padding-top: 3px; padding-bottom: 4px; line-height: 19px; }
.facts--network { padding-top: 1px; line-height: 18px; }
.facts--rf { grid-template-columns: 567fr 415fr; padding: 5px 0 4px 12px; }

.footer { height: 27px; background: linear-gradient(#5a83bd, #1a578f); }
```
